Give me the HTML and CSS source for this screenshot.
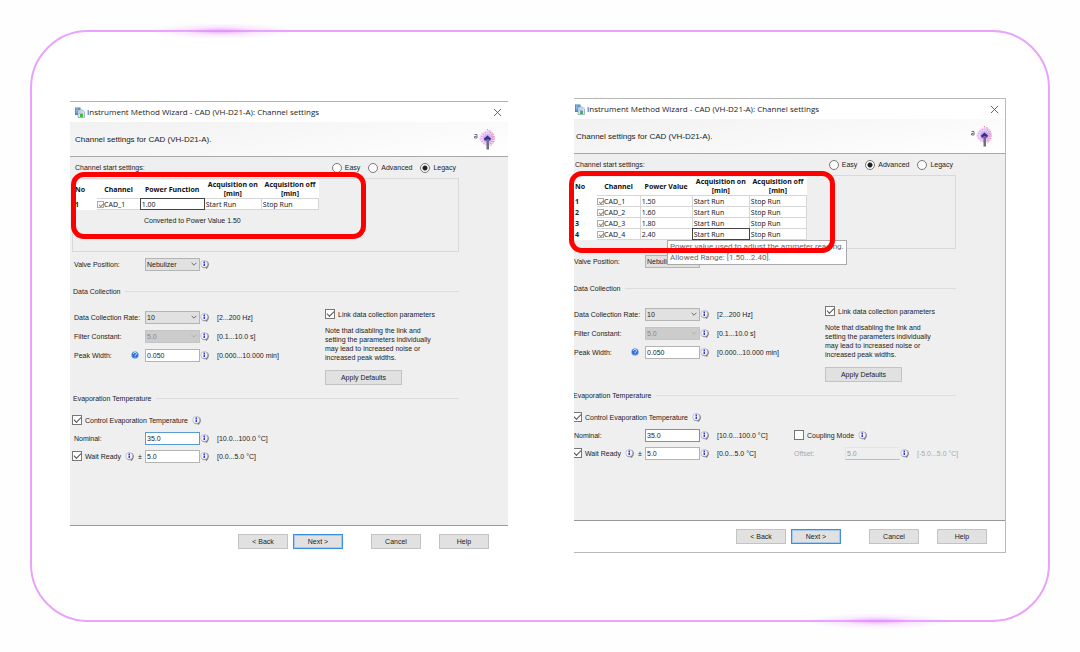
FILE: index.html
```
<!DOCTYPE html>
<html lang="en">
<head>
  <meta charset="utf-8">
  <title>Instrument Method Wizard</title>
  <link rel="stylesheet" href="styles.css">
</head>
<body>
  <!-- shared icons -->
  <svg class="sprite" aria-hidden="true">
    <symbol id="icon-info" viewBox="0 0 18 18">
      <path d="M8 12h7l-1 6z" fill="#55565e"/>
      <circle cx="10" cy="9" r="7.500" fill="#75767f"/>
      <circle cx="8.500" cy="8" r="7" fill="#f4f4ff" stroke="#9a9bb0"/>
      <path d="M8.500 3v3M8.500 7v5" stroke="#2929e8" stroke-width="2.800" fill="none"/>
    </symbol>
    <symbol id="icon-help" viewBox="0 0 16 16">
      <circle cx="8" cy="8" r="7" fill="#2b6fd6" stroke="#9cc4f5"/>
      <path d="M5 6c0-4 6-4 6-.5C11 8 8 7.500 8 10M8 11.500v1.500" stroke="#fff" stroke-width="1.800" fill="none"/>
    </symbol>
    <symbol id="icon-chevron" viewBox="0 0 10 10">
      <path d="M1 3l4 4 4-4" fill="none" stroke="currentColor" stroke-width="1.400"/>
    </symbol>
    <symbol id="icon-close" viewBox="0 0 10 10">
      <path d="M1 1l8 8M9 1l-8 8" stroke="#555" stroke-width="1"/>
    </symbol>
    <symbol id="icon-app" viewBox="0 0 22 22">
      <path d="M2 1h11v15H2z" fill="#3f83b5"/>
      <path d="M3 4h9M3 7h9M3 10h9M6 2v13" stroke="#c6e1f2" stroke-width="1"/>
      <path d="M8 6h9l4 4v11H8z" fill="#dbe7f7" stroke="#5274aa"/>
      <path d="M10 10h7M10 13h8" stroke="#7290c0"/>
      <path d="M12 14h6v6h-6z" fill="#48b840"/>
    </symbol>
    <symbol id="icon-cad" viewBox="0 0 44 44">
      <path d="M1 13h5v7H1v-3h4" fill="none" stroke="#697482" stroke-width="2"/>
      <path d="M10 22c2-10 10-18 20-18 8 4 11 10 11 17s-4 12-9 14c-10 0-18-4-22-13z" fill="#f3dcf6"/>
      <circle cx="27" cy="21" r="9" fill="#cfb0f0"/>
      <circle cx="27" cy="21" r="12" fill="none" stroke="#dca4e8" stroke-width="4" stroke-dasharray="2 3"/>
      <path d="M26 3c8 2 13 7 14 14v10c-2 5-4 7-8 9M31 8c4 3 6 8 6 13s-2 8-5 11" fill="none" stroke="#f0718b" stroke-width="2" stroke-dasharray="2 3"/>
      <path d="M20 21l7-6 7 6-2 4H21z" fill="#3a2c94"/>
      <path d="M25 22h5v21h-5z" fill="#716c80"/>
    </symbol>
  </svg>

  <main class="frame">
    <span class="glow glow-top"></span>
    <span class="glow glow-bottom"></span>

    <section class="dialog dialog-legacy">
      <header class="titlebar">
        <svg class="app-icon"><use href="#icon-app"/></svg>
        <h1>Instrument Method Wizard - CAD (VH-D21-A): Channel settings</h1>
        <button class="close" aria-label="Close"><svg><use href="#icon-close"/></svg></button>
      </header>
      <div class="banner">
        <p>Channel settings for CAD (VH-D21-A).</p>
        <svg class="cad-icon"><use href="#icon-cad"/></svg>
      </div>

      <div class="body">
        <div class="mode-row">
          <span>Channel start settings:</span>
          <div class="modes">
            <label><input type="radio" name="mode-a">Easy</label>
            <label><input type="radio" name="mode-a">Advanced</label>
            <label><input type="radio" name="mode-a" checked>Legacy</label>
          </div>
        </div>
        <div class="group">
          <table class="channels">
            <colgroup><col class="c-no"><col class="c-channel"><col class="c-function"><col class="c-acq"><col class="c-acq"></colgroup>
            <thead>
              <tr><th class="left">No</th><th>Channel</th><th>Power Function</th><th>Acquisition on [min]</th><th>Acquisition off [min]</th></tr>
            </thead>
            <tbody>
              <tr><th>1</th><td><label><input type="checkbox" checked>CAD_1</label></td><td class="edit"><input type="text" value="1.00" aria-label="Power Function"></td><td>Start Run</td><td>Stop Run</td></tr>
            </tbody>
          </table>
          <p class="converted">Converted to Power Value 1.50</p>
        </div>

        <div class="field valve">
          <label for="valve-a">Valve Position:</label>
          <span class="select"><select id="valve-a"><option>Nebulizer</option></select><svg><use href="#icon-chevron"/></svg></span>
          <svg class="info"><use href="#icon-info"/></svg>
        </div>

        <h2 class="legend">Data Collection</h2>
        <div class="collection">
          <div class="fields">
            <div class="field">
              <label for="rate-a">Data Collection Rate:</label>
              <span class="select"><select id="rate-a"><option>10</option></select><svg><use href="#icon-chevron"/></svg></span>
              <svg class="info"><use href="#icon-info"/></svg>
              <span>[2...200 Hz]</span>
            </div>
            <div class="field">
              <label for="filter-a">Filter Constant:</label>
              <span class="select off"><select id="filter-a" disabled><option>5.0</option></select><svg><use href="#icon-chevron"/></svg></span>
              <svg class="info"><use href="#icon-info"/></svg>
              <span>[0.1...10.0 s]</span>
            </div>
            <div class="field">
              <label for="peak-a">Peak Width: <svg class="help"><use href="#icon-help"/></svg></label>
              <input id="peak-a" type="text" value="0.050">
              <svg class="info"><use href="#icon-info"/></svg>
              <span>[0.000...10.000 min]</span>
            </div>
          </div>
          <div class="link">
            <label class="check"><input type="checkbox" checked>Link data collection parameters</label>
            <p>Note that disabling the link and<br>setting the parameters individually<br>may lead to increased noise or<br>increased peak widths.</p>
            <button class="btn apply">Apply Defaults</button>
          </div>
        </div>

        <h2 class="legend evaporation">Evaporation Temperature</h2>
        <div class="check-row">
          <label class="check"><input type="checkbox" checked>Control Evaporation Temperature</label>
          <svg class="info"><use href="#icon-info"/></svg>
        </div>
        <div class="field">
          <label for="nominal-a">Nominal:</label>
          <input id="nominal-a" class="active" type="text" value="35.0">
          <svg class="info"><use href="#icon-info"/></svg>
          <span>[10.0...100.0 °C]</span>
        </div>
        <div class="field">
          <div class="ready">
            <label class="check"><input type="checkbox" checked>Wait Ready</label>
            <svg class="info"><use href="#icon-info"/></svg>
            <span>±</span>
          </div>
          <input type="text" value="5.0" aria-label="Wait ready tolerance">
          <svg class="info"><use href="#icon-info"/></svg>
          <span>[0.0...5.0 °C]</span>
        </div>
      </div>

      <footer class="buttons">
        <button class="btn">&lt; Back</button>
        <button class="btn next">Next &gt;</button>
        <button class="btn cancel">Cancel</button>
        <button class="btn">Help</button>
      </footer>
      <span class="mark"></span>
    </section>

    <section class="dialog dialog-advanced">
      <header class="titlebar">
        <svg class="app-icon"><use href="#icon-app"/></svg>
        <h1>Instrument Method Wizard - CAD (VH-D21-A): Channel settings</h1>
        <button class="close" aria-label="Close"><svg><use href="#icon-close"/></svg></button>
      </header>
      <div class="banner">
        <p>Channel settings for CAD (VH-D21-A).</p>
        <svg class="cad-icon"><use href="#icon-cad"/></svg>
      </div>

      <div class="body">
        <div class="mode-row">
          <span>Channel start settings:</span>
          <div class="modes">
            <label><input type="radio" name="mode-b">Easy</label>
            <label><input type="radio" name="mode-b" checked>Advanced</label>
            <label><input type="radio" name="mode-b">Legacy</label>
          </div>
        </div>
        <div class="group">
          <table class="channels">
            <colgroup><col class="c-no"><col class="c-channel"><col class="c-value"><col class="c-acq"><col class="c-acq"></colgroup>
            <thead>
              <tr><th class="left">No</th><th>Channel</th><th>Power Value</th><th>Acquisition on [min]</th><th>Acquisition off [min]</th></tr>
            </thead>
            <tbody>
              <tr><th>1</th><td><label><input type="checkbox" checked>CAD_1</label></td><td>1.50</td><td>Start Run</td><td>Stop Run</td></tr>
              <tr><th>2</th><td><label><input type="checkbox" checked>CAD_2</label></td><td>1.60</td><td>Start Run</td><td>Stop Run</td></tr>
              <tr><th>3</th><td><label><input type="checkbox" checked>CAD_3</label></td><td>1.80</td><td>Start Run</td><td>Stop Run</td></tr>
              <tr><th>4</th><td><label><input type="checkbox" checked>CAD_4</label></td><td>2.40</td><td class="current">Start Run</td><td>Stop Run</td></tr>
            </tbody>
          </table>
        </div>

        <div class="field valve">
          <label for="valve-b">Valve Position:</label>
          <span class="select"><select id="valve-b"><option>Nebulizer</option></select><svg><use href="#icon-chevron"/></svg></span>
        </div>

        <h2 class="legend">Data Collection</h2>
        <div class="collection">
          <div class="fields">
            <div class="field">
              <label for="rate-b">Data Collection Rate:</label>
              <span class="select"><select id="rate-b"><option>10</option></select><svg><use href="#icon-chevron"/></svg></span>
              <svg class="info"><use href="#icon-info"/></svg>
              <span>[2...200 Hz]</span>
            </div>
            <div class="field">
              <label for="filter-b">Filter Constant:</label>
              <span class="select off"><select id="filter-b" disabled><option>5.0</option></select><svg><use href="#icon-chevron"/></svg></span>
              <svg class="info"><use href="#icon-info"/></svg>
              <span>[0.1...10.0 s]</span>
            </div>
            <div class="field">
              <label for="peak-b">Peak Width: <svg class="help"><use href="#icon-help"/></svg></label>
              <input id="peak-b" type="text" value="0.050">
              <svg class="info"><use href="#icon-info"/></svg>
              <span>[0.000...10.000 min]</span>
            </div>
          </div>
          <div class="link">
            <label class="check"><input type="checkbox" checked>Link data collection parameters</label>
            <p>Note that disabling the link and<br>setting the parameters individually<br>may lead to increased noise or<br>increased peak widths.</p>
            <button class="btn apply">Apply Defaults</button>
          </div>
        </div>

        <h2 class="legend evaporation">Evaporation Temperature</h2>
        <div class="check-row">
          <label class="check"><input type="checkbox" checked>Control Evaporation Temperature</label>
          <svg class="info"><use href="#icon-info"/></svg>
        </div>
        <div class="field">
          <label for="nominal-b">Nominal:</label>
          <input id="nominal-b" class="active" type="text" value="35.0">
          <svg class="info"><use href="#icon-info"/></svg>
          <span>[10.0...100.0 °C]</span>
          <div class="coupling">
            <label class="check"><input type="checkbox">Coupling Mode</label>
            <svg class="info"><use href="#icon-info"/></svg>
          </div>
        </div>
        <div class="field">
          <div class="ready">
            <label class="check"><input type="checkbox" checked>Wait Ready</label>
            <svg class="info"><use href="#icon-info"/></svg>
            <span>±</span>
          </div>
          <input type="text" value="5.0" aria-label="Wait ready tolerance">
          <svg class="info"><use href="#icon-info"/></svg>
          <span>[0.0...5.0 °C]</span>
          <div class="offset">
            <label for="offset">Offset:</label>
            <input id="offset" type="text" value="5.0" disabled>
            <svg class="info"><use href="#icon-info"/></svg>
            <span>[-5.0...5.0 °C]</span>
          </div>
        </div>
      </div>

      <footer class="buttons">
        <button class="btn">&lt; Back</button>
        <button class="btn next">Next &gt;</button>
        <button class="btn cancel">Cancel</button>
        <button class="btn">Help</button>
      </footer>
      <div class="tooltip">Power value used to adjust the ammeter reading.<br>Allowed Range: [1.50...2.40].</div>
      <span class="mark"></span>
    </section>
  </main>
</body>
</html>
```
FILE: styles.css
```
* {
  box-sizing: border-box;
}

body {
  margin: 0;
  padding: 30px;
  background: #fefefe;
  color: #222;
  font: 7px/9px "Liberation Sans", Arial, sans-serif;
}

h1, h2, p {
  margin: 0;
  font-size: inherit;
  font-weight: normal;
}

button, input, select {
  margin: 0;
  color: inherit;
  font: inherit;
}

svg {
  display: block;
  flex: none;
}

.sprite {
  position: absolute;
  width: 0;
  height: 0;
}

/* outer frame */
.frame {
  position: relative;
  display: grid;
  grid-template-columns: 438fr 432fr;
  align-items: start;
  gap: 66px;
  min-height: calc(100vh - 60px);
  padding: 66px 42px 40px 38px;
  border: 2px solid #e9a3fb;
  border-radius: 58px;
  background: #fff;
}

.glow {
  position: absolute;
  width: 150px;
  height: 16px;
  background: radial-gradient(closest-side, rgba(225, 140, 250, .7), rgba(235, 170, 255, .25) 50%, transparent);
}

.glow-top {
  top: -9px;
  left: 114px;
}

.glow-bottom {
  right: 96px;
  bottom: -9px;
}

/* dialog */
.dialog {
  position: relative;
  display: flex;
  flex-direction: column;
  min-width: 0;
  border-top: 1px solid #a5b3bc;
  background: #fff;
}

.dialog-legacy {
  margin-top: 3px;
}

.dialog-advanced {
  border: 1px solid #b9b9b9;
  border-left: 0;
}

.titlebar {
  display: flex;
  align-items: center;
  gap: 2px;
  height: 20px;
  padding: 0 6px 0 4px;
}

.titlebar h1 {
  flex: 1;
  font: 8px/12px "Open Sans", sans-serif;
  white-space: nowrap;
}

.dialog-advanced .titlebar {
  padding-left: 0;
}

.app-icon {
  width: 11px;
  height: 11px;
}

.close {
  padding: 0;
  border: 0;
  background: none;
}

.close svg {
  width: 9px;
  height: 9px;
}

.banner {
  display: flex;
  align-items: center;
  justify-content: space-between;
  height: 35px;
  padding: 0 12px 0 5px;
  border-bottom: 1px solid #a8a8a8;
  background: linear-gradient(170deg, #f1f1f1, #fff);
  font-size: 8px;
}

.dialog-advanced .banner {
  padding-left: 2px;
}

.cad-icon {
  width: 22px;
  height: 22px;
}

.body {
  min-height: 369px;
  padding: 0 49px 20px 2px;
  border-bottom: 1px solid #999;
  background: #efefef;
  overflow: hidden;
}

.dialog-advanced .body {
  min-height: 367px;
  padding-left: 0;
}

.dialog-advanced .body > * {
  margin-left: -2px;
}

.mode-row {
  display: flex;
  align-items: center;
  justify-content: space-between;
  height: 21px;
  padding: 0 3px;
}

.modes {
  display: flex;
  gap: 8px;
}

.modes label,
.check {
  display: flex;
  align-items: center;
  gap: 3px;
  white-space: nowrap;
}

input[type="radio"],
input[type="checkbox"] {
  flex: none;
  display: block;
  width: 10px;
  height: 10px;
  border: 1px solid #777;
  background: #fff;
  appearance: none;
}

input[type="radio"] {
  border-radius: 50%;
}

input[type="radio"]:checked {
  background: radial-gradient(circle, #222 0 2px, #fff 3px);
}

input[type="checkbox"]:checked::before {
  content: "";
  display: block;
  width: 6px;
  height: 3px;
  margin: 1px;
  border: solid #555;
  border-width: 0 0 1px 1px;
  transform: rotate(-45deg);
}

/* channel table */
.group {
  height: 74px;
  padding-top: 1px;
  border: 1px solid #d9d9d9;
}

.channels {
  table-layout: fixed;
  width: 246px;
  border-collapse: collapse;
  background: #fff;
  font: 7px/9px "Noto Sans", sans-serif;
}

.dialog-advanced .channels {
  width: 234px;
}

.c-no { width: 24px; }
.c-channel { width: 43px; }
.c-function { width: 64px; }
.c-value { width: 52px; }
.c-acq { width: 57px; }

.channels th {
  padding: 0;
  font-weight: bold;
}

.channels thead th {
  color: #111;
}

.channels th.left,
.channels tbody th {
  padding-left: 2px;
  text-align: left;
}

.channels td {
  height: 11px;
  padding: 0 1px;
  border: 1px solid #d6d6d6;
  white-space: nowrap;
}

.channels td:nth-child(2) {
  padding: 0;
  border-left: 0;
}

.channels td.current,
.channels td.edit {
  border: 1px double #444;
}

.channels td label {
  display: flex;
  align-items: center;
}

.channels input[type="checkbox"] {
  width: 7px;
  height: 7px;
  border-color: #aaa;
}

.channels input[type="checkbox"]:checked::before {
  width: 4px;
  height: 2px;
  border-color: #888;
}

.channels input[type="text"] {
  display: block;
  width: 100%;
  height: 9px;
  padding: 0;
  border: 0;
  background: none;
}

.converted {
  margin: 6px 0 0 71px;
}

/* label, control, info icon, range, extra */
.field {
  display: grid;
  grid-template-columns: 73px 55px 17px 77px 1fr;
  align-items: center;
  height: 18px;
  white-space: nowrap;
}

.field > label {
  display: flex;
  align-items: center;
  justify-content: space-between;
  padding: 0 6px 0 2px;
}

.valve {
  height: 24px;
}

.field input[type="text"],
.select select {
  width: 100%;
  height: 13px;
  padding: 0 1px;
  border: 1px solid #b4b4b4;
  border-radius: 0;
  background: #fff;
}

.field input[type="text"].active {
  border-color: #5b9bd5;
}

.field input[type="text"]:disabled {
  border-color: #e4e4e4 #efefef #bbb #e4e4e4;
  background: #efefef;
  color: #999;
}

.select {
  display: grid;
  align-items: center;
}

.select select,
.select svg {
  grid-area: 1 / 1;
}

.select select {
  background: #e1e1e1;
  appearance: none;
}

.select svg {
  justify-self: end;
  width: 6px;
  height: 6px;
  margin-right: 3px;
  color: #555;
  pointer-events: none;
}

.select.off select {
  border-color: #c4c4c4;
  background: #ccc;
  color: #888;
  opacity: 1;
}

.select.off svg {
  color: #aaa;
}

.info {
  width: 9px;
  height: 9px;
}

.help {
  width: 8px;
  height: 8px;
}

/* section heading with a rule */
.legend {
  display: flex;
  align-items: center;
  gap: 5px;
  height: 30px;
  padding-left: 1px;
}

.legend::after {
  content: "";
  flex: 1;
  height: 1px;
  background: #dcdcdc;
}

.evaporation {
  height: 20px;
}

.collection {
  display: grid;
  grid-template-columns: 253px 1fr;
  height: 82px;
}

.fields {
  display: grid;
  align-content: start;
  gap: 1px;
  padding-top: 2px;
}

.link .check {
  height: 16px;
}

.link p {
  margin: 4px 0 8px;
  white-space: nowrap;
}

.check-row {
  display: flex;
  align-items: center;
  gap: 4px;
  height: 21px;
  padding-top: 3px;
}

.ready,
.coupling {
  display: flex;
  align-items: center;
  gap: 4px;
}

.offset {
  display: grid;
  grid-template-columns: 51px 55px 17px auto;
  align-items: center;
  color: #aaa;
}

/* buttons */
.btn {
  width: 50px;
  height: 15px;
  padding: 0;
  border: 1px solid #c3c3c3;
  background: #e1e1e1;
}

.apply {
  width: 77px;
}

.next {
  border: 1px solid #3c8fdd;
  box-shadow: inset 0 0 0 1px #a3cbf0;
}

.buttons {
  display: flex;
  justify-content: flex-end;
  gap: 5px;
  padding: 8px 19px;
}

.dialog-advanced .buttons {
  padding-right: 18px;
}

.cancel {
  margin: 0 13px 0 23px;
}

/* annotations over the dialogs */
.tooltip {
  position: absolute;
  top: 141px;
  left: 93px;
  padding: 0 2px 1px;
  border: 1px solid #aaa;
  background: #fff;
  color: #666;
  font: 8px/11px Roboto, sans-serif;
  white-space: nowrap;
}

.mark {
  position: absolute;
  top: 70px;
  left: 1px;
  width: 295px;
  height: 67px;
  border: 5px solid #f00;
  border-radius: 13px;
}

.dialog-advanced .mark {
  top: 72px;
  left: -5px;
  width: 266px;
  height: 82px;
}
```
